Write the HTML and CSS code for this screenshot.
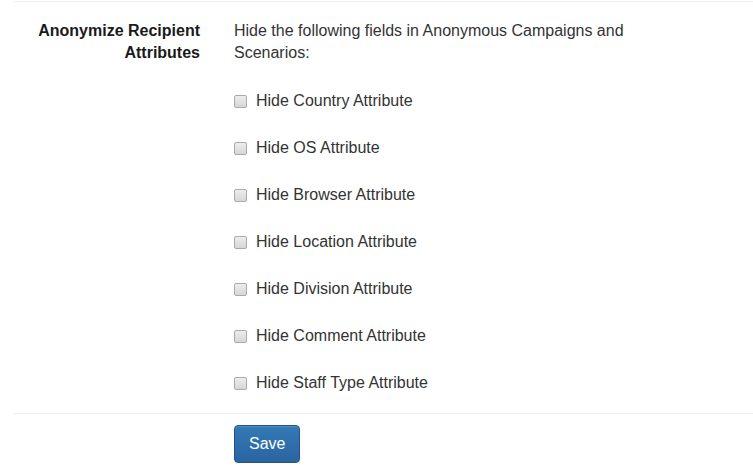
FILE: index.html
```html
<!DOCTYPE html>
<html lang="en">
<head>
    <meta charset="UTF-8">
    <meta name="viewport" content="width=device-width, initial-scale=1.0">
    <title>Anonymize Settings</title>
    <link rel="stylesheet" href="styles.css">
</head>
<body>

<form class="settings-form">
    <div class="form-group">
        <label class="control-label">Anonymize Recipient Attributes</label>
        <div class="controls">
            <p class="help">Hide the following fields in Anonymous Campaigns and Scenarios:</p>
            <label class="check"><input type="checkbox"> Hide Country Attribute</label>
            <label class="check"><input type="checkbox"> Hide OS Attribute</label>
            <label class="check"><input type="checkbox"> Hide Browser Attribute</label>
            <label class="check"><input type="checkbox"> Hide Location Attribute</label>
            <label class="check"><input type="checkbox"> Hide Division Attribute</label>
            <label class="check"><input type="checkbox"> Hide Comment Attribute</label>
            <label class="check"><input type="checkbox"> Hide Staff Type Attribute</label>
        </div>
    </div>

    <div class="form-actions">
        <button type="button" class="btn btn-primary">Save</button>
    </div>
</form>

</body>
</html>
```

FILE: styles.css
```css
body {
    margin: 0;
    padding: 1px 0 0 14px;
    font-family: "Liberation Sans", Arial, sans-serif;
    font-size: 16px;
    line-height: 22px;
    color: #333;
    background: #fff;
}
.settings-form {
    border-top: 1px solid #eee;
}
.form-group {
    display: grid;
    grid-template-columns: 186px 420px;
    column-gap: 34px;
    padding: 18px 0 19px;
    border-bottom: 1px solid #eee;
}
.control-label {
    font-weight: bold;
    text-align: right;
    color: #1a1a1a;
}
.controls {
    display: flex;
    flex-direction: column;
    gap: 25px;
}
.help {
    margin: 0 0 1px;
}
.check {
    display: flex;
    align-items: center;
    gap: 9px;
    height: 22px;
}
.check input {
    appearance: none;
    -webkit-appearance: none;
    width: 13px;
    height: 13px;
    margin: 0;
    border: 1px solid #aaa;
    border-radius: 2px;
    background: linear-gradient(#ededed, #d6d6d6);
}
.form-actions {
    padding: 11px 0 0 220px;
}
.btn {
    font-family: inherit;
    font-size: 16px;
    line-height: 22px;
    padding: 7px 14px;
    border-radius: 4px;
    cursor: pointer;
}
.btn-primary {
    color: #fff;
    border: 1px solid #245580;
    background: linear-gradient(#337ab7, #2a65a0);
    box-shadow: inset 0 1px 0 rgba(255, 255, 255, 0.15), 0 1px 1px rgba(0, 0, 0, 0.075);
}
```
